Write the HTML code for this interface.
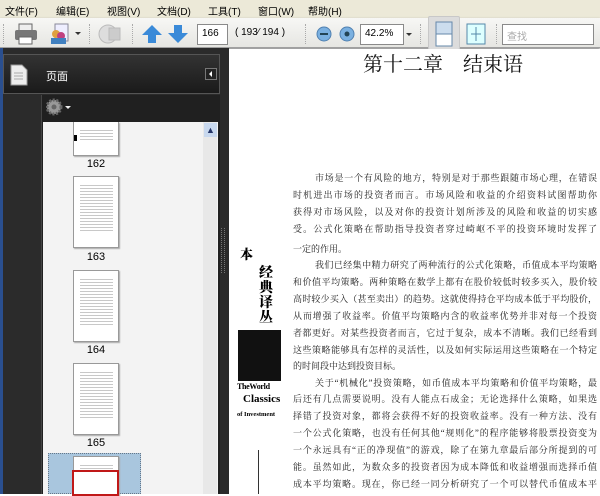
<!DOCTYPE html>
<html><head><meta charset="utf-8">
<style>
*{margin:0;padding:0;box-sizing:border-box}
body{width:600px;height:494px;overflow:hidden;position:relative;background:#fff;font-family:"Liberation Sans","Noto Sans CJK SC",sans-serif}
.a{position:absolute}
#menu{left:0;top:0;width:600px;height:18px;background:#ece9d8;font-size:10px;color:#000}
#menu span{position:absolute;top:3px}
#tb{left:0;top:18px;width:600px;height:30px;background:linear-gradient(#f7f7f5,#e6e6e2);border-bottom:1px solid #a0a0a0;box-shadow:0 1px 2px #777}
.sep{position:absolute;top:6px;width:2px;height:20px;border-left:1px dotted #aaa}
.box{position:absolute;background:#fff;border:1px solid #8a8a8a;font-size:10px;color:#000;padding:3px 0 0 4px}
#side{left:0;top:48px;width:229px;height:446px;background:#2b2b2b}
.doc{font-family:"Liberation Serif","Noto Serif CJK SC",serif;font-size:9px;color:#222;left:293px;width:304px;height:17px;line-height:17px;text-align:justify;text-align-last:justify;white-space:nowrap;overflow:hidden}
.thumb{position:absolute;left:73px;width:46px;background:#fff;border:1px solid #999;box-shadow:1px 1px 1px #aaa}
.thumb::after{content:"";position:absolute;left:6px;right:5px;top:8px;bottom:14px;background:repeating-linear-gradient(#c8c8c8 0 1px,transparent 1px 3px)}
.lbl{position:absolute;left:73px;width:46px;text-align:center;font-size:11px;color:#000}
</style></head><body>
<div id="menu" class="a">
<span style="left:5px">文件(F)</span><span style="left:56px">编辑(E)</span><span style="left:107px">视图(V)</span><span style="left:157px">文档(D)</span><span style="left:208px">工具(T)</span><span style="left:258px">窗口(W)</span><span style="left:308px">帮助(H)</span>
</div>
<div id="tb" class="a">
<div class="sep" style="left:3px"></div>
<svg class="a" style="left:14px;top:5px" width="24" height="22"><rect x="5" y="1" width="13" height="7" fill="#eee" stroke="#666"/><rect x="1" y="7" width="22" height="10" rx="2" fill="#777"/><rect x="5" y="14" width="13" height="7" fill="#fff" stroke="#666"/></svg>
<svg class="a" style="left:48px;top:4px" width="24" height="24"><rect x="7" y="2" width="13" height="17" fill="#eef" stroke="#889"/><circle cx="8" cy="12" r="4" fill="#e0a040"/><circle cx="13" cy="14" r="4" fill="#c04080"/><rect x="3" y="16" width="15" height="6" fill="#4080c0"/></svg>
<div class="a" style="left:75px;top:14px;border:3px solid transparent;border-top:3px solid #333"></div>
<div class="sep" style="left:89px"></div>
<svg class="a" style="left:97px;top:4px" width="26" height="24"><circle cx="11" cy="12" r="9" fill="#ddd" stroke="#bbb"/><rect x="12" y="6" width="11" height="12" fill="#ccc" stroke="#bbb"/></svg>
<div class="sep" style="left:132px"></div>
<svg class="a" style="left:141px;top:6px" width="22" height="20"><path d="M11 1 L21 11 L15 11 L15 19 L7 19 L7 11 L1 11Z" fill="#3a8ad8"/></svg>
<svg class="a" style="left:167px;top:6px" width="22" height="20"><path d="M11 19 L21 9 L15 9 L15 1 L7 1 L7 9 L1 9Z" fill="#3a8ad8"/></svg>
<div class="box" style="left:197px;top:6px;width:31px;height:21px">166</div>
<div class="a" style="left:235px;top:9px;font-size:10px">( 193⁄ 194 )</div>
<div class="sep" style="left:305px"></div>
<svg class="a" style="left:316px;top:8px" width="40" height="16"><circle cx="8" cy="8" r="7" fill="#7ab0e0" stroke="#5080b0"/><rect x="4" y="7" width="8" height="2" fill="#245"/><circle cx="31" cy="8" r="7" fill="#7ab0e0" stroke="#5080b0"/><circle cx="31" cy="8" r="2.5" fill="#245"/></svg>
<div class="box" style="left:360px;top:6px;width:44px;height:21px">42.2%</div>
<div class="a" style="left:406px;top:15px;border:3px solid transparent;border-top:3px solid #333"></div>
<div class="sep" style="left:420px"></div>
<div class="a" style="left:428px;top:-2px;width:32px;height:34px;background:#dcdcdc;border:1px solid #c8c8c8;border-radius:2px"></div>
<svg class="a" style="left:433px;top:3px" width="22" height="26"><rect x="3" y="1" width="16" height="24" fill="#cde" stroke="#68a"/><rect x="3" y="13" width="16" height="12" fill="#fff" stroke="#68a"/></svg>
<svg class="a" style="left:465px;top:5px" width="22" height="22"><rect x="2" y="1" width="18" height="20" fill="#dff" stroke="#58a"/><path d="M11 4v14M6 11h10" stroke="#58a"/></svg>
<div class="sep" style="left:496px"></div>
<div class="box" style="left:502px;top:6px;width:92px;height:21px;color:#aaa">查找</div>
</div>

<div id="side" class="a">
<div class="a" style="left:0;top:0;width:3px;height:446px;background:#2a4f8f"></div>
<div class="a" style="left:3px;top:6px;width:217px;height:40px;background:linear-gradient(#333,#1a1a1a);border:1px solid #555"></div>
<svg class="a" style="left:10px;top:16px" width="18" height="22"><path d="M1 1h11l5 5v15H1z" fill="#eee" stroke="#999"/><path d="M4 9h9M4 12h9M4 15h9" stroke="#aaa"/></svg>
<div class="a" style="left:46px;top:20px;font-size:11px;color:#fff">页面</div>
<div class="a" style="left:205px;top:20px;width:12px;height:12px;border:1px solid #777;background:#222"><div class="a" style="left:3px;top:2px;border:3px solid transparent;border-right:3px solid #fff;border-left:0"></div></div>
<div class="a" style="left:41px;top:47px;width:179px;height:399px;background:#202020;border-left:1px solid #444"></div>
<svg class="a" style="left:46px;top:50px" width="28" height="18"><circle cx="8" cy="9" r="7" fill="#999" stroke="#666" stroke-dasharray="2 1.5" stroke-width="3"/><circle cx="8" cy="9" r="2.5" fill="#666"/><path d="M19 8h6l-3 3z" fill="#eee"/></svg>
<div class="a" style="left:43px;top:74px;width:175px;height:372px;background:#f3f3f3"></div>
<div class="a" style="left:203px;top:74px;width:14px;height:372px;background:#e8e8e8"></div>
<div class="a" style="left:204px;top:75px;width:13px;height:14px;background:#c8d8ee;color:#236;font-size:9px;text-align:center;line-height:14px">▲</div>
<div class="a" style="left:221px;top:180px;width:4px;height:45px;border-left:1px dotted #777;border-right:1px dotted #777"></div>
</div>
<div class="thumb" style="top:122px;height:34px;border-top:none"></div>
<div class="a" style="left:74px;top:135px;width:3px;height:6px;background:#000"></div>
<div class="lbl" style="top:158px">162</div>
<div class="thumb" style="top:176px;height:72px"></div>
<div class="lbl" style="top:251px">163</div>
<div class="thumb" style="top:270px;height:72px"></div>
<div class="lbl" style="top:344px">164</div>
<div class="thumb" style="top:363px;height:72px"></div>
<div class="lbl" style="top:437px">165</div>
<div class="a" style="left:48px;top:453px;width:93px;height:41px;background:#a9c6de;border:1px dotted #678"></div>
<div class="thumb" style="top:456px;height:40px"></div>
<div class="a" style="left:72px;top:470px;width:47px;height:26px;border:2px solid #c01818;background:#fff"></div>

<div class="a" style="left:229px;top:49px;width:371px;height:445px;background:#fff"></div>
<div class="a" style="left:363px;top:48px;font-family:'Liberation Serif','Noto Serif CJK SC',serif;font-size:20px;color:#111;white-space:nowrap">第十二章　结束语</div>
<div class="a" style="left:240px;top:244px;font-family:'Noto Serif CJK SC',serif;font-weight:900;font-size:13px">本</div>
<div class="a" style="left:259px;top:265px;width:14px;font-family:'Noto Serif CJK SC',serif;font-weight:900;font-size:14px;line-height:15px">经典译丛</div>
<div class="a" style="left:238px;top:330px;width:43px;height:51px;background:#111"></div>
<div class="a" style="left:237px;top:382px;font-family:'Liberation Serif',serif;font-weight:bold;font-size:8px;letter-spacing:-0.3px">TheWorld</div>
<div class="a" style="left:243px;top:393px;font-family:'Liberation Serif',serif;font-weight:bold;font-size:11px">Classics</div>
<div class="a" style="left:237px;top:411px;font-family:'Liberation Serif',serif;font-weight:bold;font-size:6.5px">of Investment</div>
<div class="a" style="left:258px;top:450px;width:1px;height:44px;background:#333"></div>

<div class="a doc" style="top:170px;left:315px;width:282px">市场是一个有风险的地方，特别是对于那些跟随市场心理，在错误</div>
<div class="a doc" style="top:187px">时机进出市场的投资者而言。市场风险和收益的介绍资料试图帮助你</div>
<div class="a doc" style="top:204px">获得对市场风险，以及对你的投资计划所涉及的风险和收益的切实感</div>
<div class="a doc" style="top:221px">受。公式化策略在帮助指导投资者穿过崎岖不平的投资环境时发挥了</div>
<div class="a doc" style="top:241px;text-align-last:left">一定的作用。</div>
<div class="a doc" style="top:257px;left:315px;width:282px">我们已经集中精力研究了两种流行的公式化策略，币值成本平均策略</div>
<div class="a doc" style="top:274px">和价值平均策略。两种策略在数学上都有在股价较低时较多买入，股价较</div>
<div class="a doc" style="top:291px">高时较少买入（甚至卖出）的趋势。这就使得持仓平均成本低于平均股价，</div>
<div class="a doc" style="top:308px">从而增强了收益率。价值平均策略内含的收益率优势并非对每一个投资</div>
<div class="a doc" style="top:325px">者都更好。对某些投资者而言，它过于复杂，成本不清晰。我们已经看到</div>
<div class="a doc" style="top:342px">这些策略能够具有怎样的灵活性，以及如何实际运用这些策略在一个特定</div>
<div class="a doc" style="top:358px;text-align-last:left">的时间段中达到投资目标。</div>
<div class="a doc" style="top:375px;left:315px;width:282px">关于“机械化”投资策略，如币值成本平均策略和价值平均策略，最</div>
<div class="a doc" style="top:391px">后还有几点需要说明。没有人能点石成金；无论选择什么策略，如果选</div>
<div class="a doc" style="top:408px">择错了投资对象，都将会获得不好的投资收益率。没有一种方法、没有</div>
<div class="a doc" style="top:425px">一个公式化策略，也没有任何其他“规则化”的程序能够将股票投资变为</div>
<div class="a doc" style="top:442px">一个永远具有“正的净现值”的游戏，除了在第九章最后部分所提到的可</div>
<div class="a doc" style="top:459px">能。虽然如此，为数众多的投资者因为成本降低和收益增强而选择币值</div>
<div class="a doc" style="top:476px">成本平均策略。现在，你已经一同分析研究了一个可以替代币值成本平</div>
</body></html>
